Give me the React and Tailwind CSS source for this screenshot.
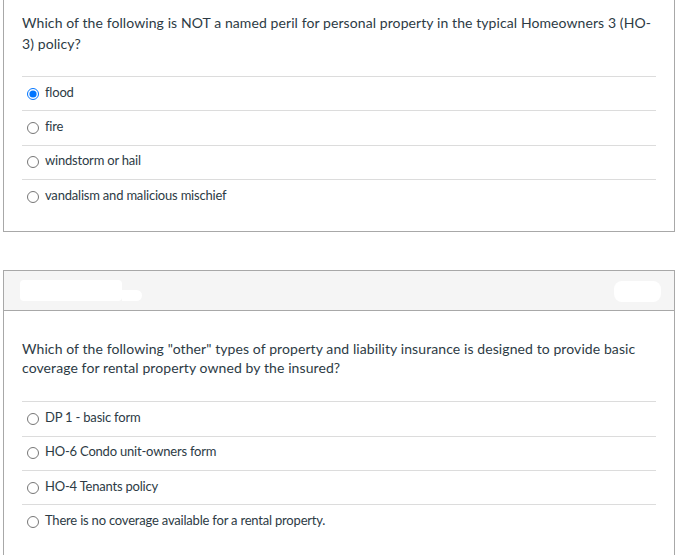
import React from "react";

const questions = [
  {
    id: "q1",
    text: "Which of the following is NOT a named peril for personal property in the typical Homeowners 3 (HO-3) policy?",
    answers: ["flood", "fire", "windstorm or hail", "vandalism and malicious mischief"],
    selected: 0,
  },
  {
    id: "q2",
    text: 'Which of the following "other" types of property and liability insurance is designed to provide basic coverage for rental property owned by the insured?',
    answers: [
      "DP 1 - basic form",
      "HO-6 Condo unit-owners form",
      "HO-4 Tenants policy",
      "There is no coverage available for a rental property.",
    ],
    selected: null,
  },
];

const Answer = ({ name, label, checked }) => (
  <label className="flex items-center h-[34.34px] border-t border-[#dcdcdc]">
    <input
      type="radio"
      name={name}
      defaultChecked={checked}
      className="ml-[5px] mr-[6px] w-[12px] h-[12px] m-0"
    />
    <span className="text-[13px] text-[#2d3b45] tracking-[-0.2px] leading-5 -mt-[4px]">
      {label}
    </span>
  </label>
);

export default function App() {
  return (
    <div
      className="bg-white w-[686px] h-[555px] overflow-hidden"
      style={{ fontFamily: "Lato, 'Noto Sans', sans-serif" }}
    >
      {/* first question, scrolled so its header is above the fold */}
      <div className="ml-[3px] mr-[11px] border-x border-b border-[#a8a8a8]">
        <div className="px-[18px] pb-[18px]">
          <p className="text-[14px] leading-[21px] tracking-[0.09px] text-[#2d3b45] pt-[12px] pb-[22px]">
            {questions[0].text}
          </p>
          <div className="flex flex-col">
            {questions[0].answers.map((a, i) => (
              <Answer key={a} name="q1" label={a} checked={questions[0].selected === i} />
            ))}
          </div>
        </div>
      </div>

      <div className="mt-[38px] ml-[3px] mr-[11px] border border-[#a8a8a8] border-b-0">
        <div className="h-[40px] bg-[#f5f5f5] border-b border-[#a8a8a8] flex items-center justify-between pl-[16px] pr-[13px]">
          <div className="flex items-end">
            <div className="w-[102px] h-[21px] bg-white rounded-sm" />
            <div className="w-[20px] h-[11px] bg-white rounded-r-md" />
          </div>
          <div className="w-[47px] h-[21px] bg-white rounded-lg mt-[1px]" />
        </div>
        <div className="px-[18px] pt-[18px] pb-[40px]">
          <p className="text-[14px] leading-[19px] tracking-[0.09px] text-[#2d3b45] pt-[10px] pb-[24px]">
            {questions[1].text}
          </p>
          <div className="flex flex-col">
            {questions[1].answers.map((a) => (
              <Answer key={a} name="q2" label={a} checked={false} />
            ))}
          </div>
        </div>
      </div>
    </div>
  );
}
